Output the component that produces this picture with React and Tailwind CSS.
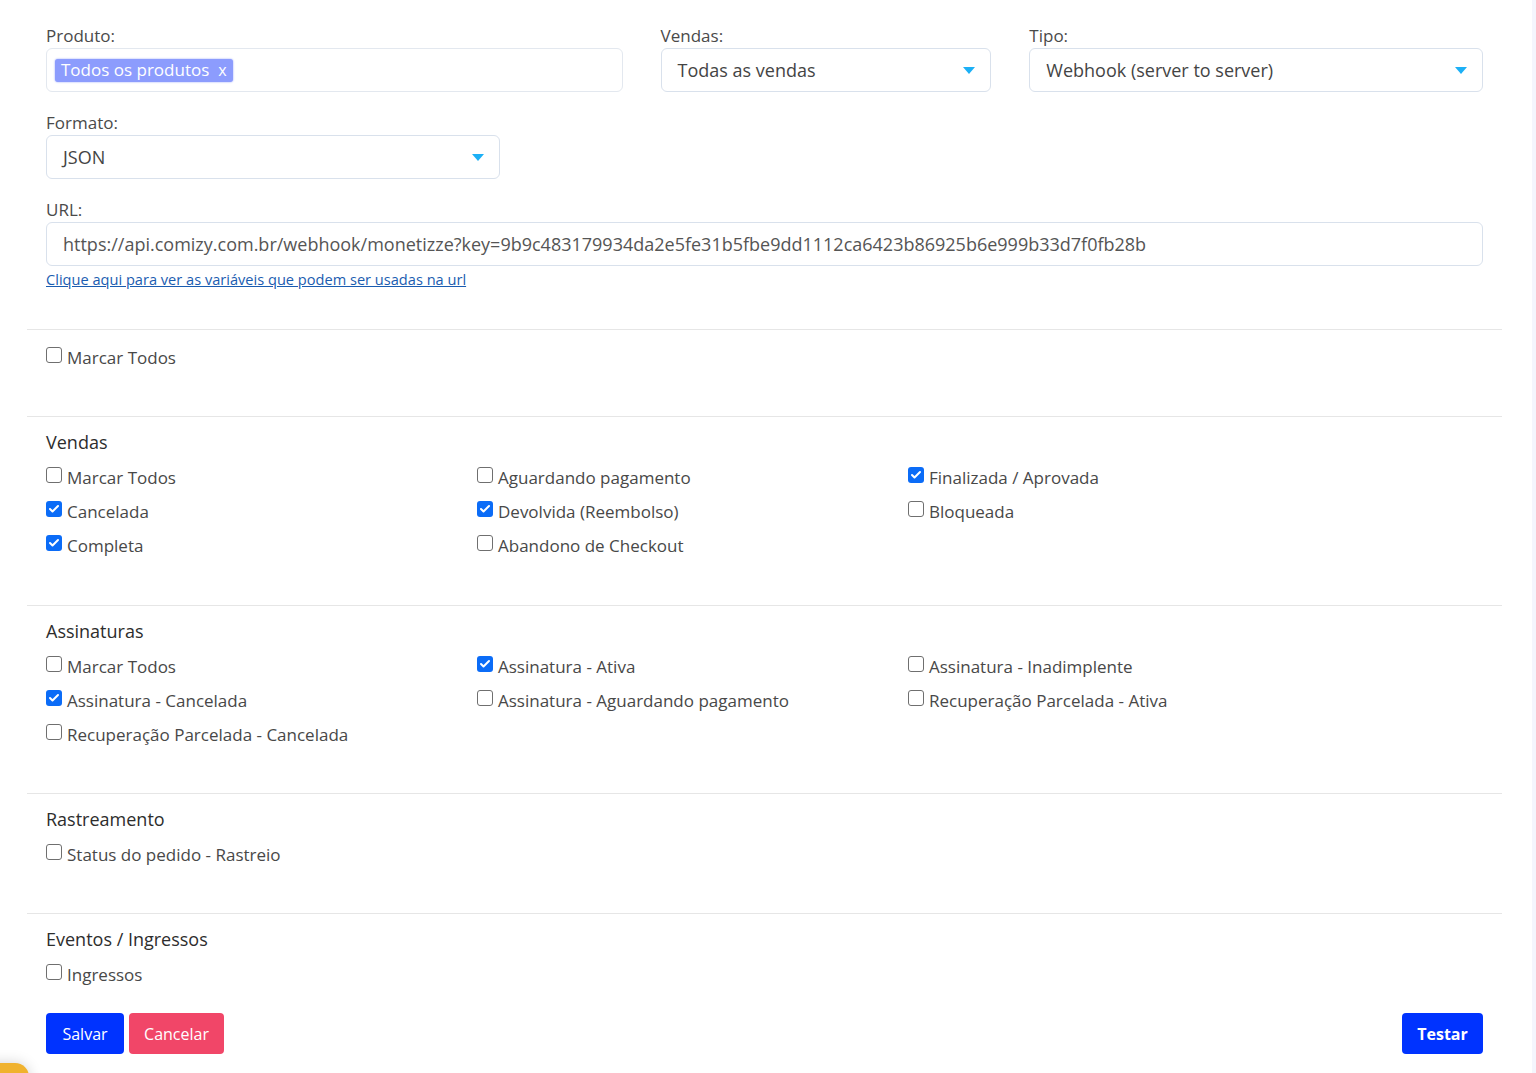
import { Check } from 'lucide-react'

const font = { fontFamily: '"Open Sans", "Noto Sans", sans-serif' }

function Caret() {
  return (
    <svg width="12" height="7" viewBox="0 0 12 7" className="shrink-0">
      <path d="M0 0h12L6 7z" fill="#1cb0f6" />
    </svg>
  )
}

function Field({ label, children, className = '' }) {
  return (
    <div className={`flex flex-col ${className}`}>
      <label className="h-6 text-[17px] leading-6 text-[#4a4a4a]">{label}</label>
      {children}
    </div>
  )
}

function SelectBox({ value }) {
  return (
    <div className="h-[44px] flex items-center justify-between px-4 pr-[15px] border border-[#d9e1ec] rounded-[6px] bg-white text-[18px] text-[#444]">
      <span>{value}</span>
      <Caret />
    </div>
  )
}

function Box({ label, checked }) {
  return (
    <div className="h-[34px] flex items-center">
      {checked ? (
        <span className="mb-1.5 w-4 h-4 rounded-[3px] bg-[#0b6cf7] flex items-center justify-center">
          <Check size={12} strokeWidth={4} color="white" />
        </span>
      ) : (
        <span className="mb-1.5 w-4 h-4 rounded-[3px] border border-[#6f6f6f] bg-white" />
      )}
      <span className="ml-[5px] text-[17px] text-[#484848]">{label}</span>
    </div>
  )
}

function Section({ title, items, bottom = 'pb-[41px]' }) {
  const pad = title ? 'pt-[13px]' : 'pt-[11px]'
  return (
    <div className={`border-t border-[#e6e6e6] px-[19px] ${pad} ${bottom}`}>
      {title && <h3 className="h-6 leading-6 text-[18px] font-medium text-[#2d2d2d]">{title}</h3>}
      <div className={`grid grid-cols-[431px_431px_1fr] ${title ? 'mt-[7px]' : ''}`}>
        {items.map(([l, c]) => (
          <Box key={l} label={l} checked={c} />
        ))}
      </div>
    </div>
  )
}

const vendas = [
  ['Marcar Todos', false],
  ['Aguardando pagamento', false],
  ['Finalizada / Aprovada', true],
  ['Cancelada', true],
  ['Devolvida (Reembolso)', true],
  ['Bloqueada', false],
  ['Completa', true],
  ['Abandono de Checkout', false],
]

const assinaturas = [
  ['Marcar Todos', false],
  ['Assinatura - Ativa', true],
  ['Assinatura - Inadimplente', false],
  ['Assinatura - Cancelada', true],
  ['Assinatura - Aguardando pagamento', false],
  ['Recuperação Parcelada - Ativa', false],
  ['Recuperação Parcelada - Cancelada', false],
]

export default function App() {
  return (
    <div className="relative h-[1073px] overflow-hidden bg-white flex" style={font}>
      <div className="flex-1 pl-[27px] pr-[30px] pt-6">
        {/* Top form fields */}
        <div className="px-[19px]">
          <div className="grid grid-cols-12 gap-x-[38px] gap-y-[19px]">
            <Field label="Produto:" className="col-span-5">
              <div className="h-[44px] flex items-center px-2 border border-[#e3e8ef] rounded-[6px] bg-white">
                <span className="h-[23px] flex items-center gap-[9px] px-[6px] rounded-[3px] bg-[#8c9cfd] text-white text-[17px] shadow-[0_0_2px_#8c9cfd]">
                  Todos os produtos
                  <span className="text-[16px]">x</span>
                </span>
              </div>
            </Field>
            <Field label="Vendas:" className="col-span-3">
              <SelectBox value="Todas as vendas" />
            </Field>
            <Field label="Tipo:" className="col-span-4">
              <SelectBox value="Webhook (server to server)" />
            </Field>
            <Field label="Formato:" className="col-span-4">
              <SelectBox value="JSON" />
            </Field>
            <Field label="URL:" className="col-span-12">
              <div className="h-[44px] flex items-center px-4 border border-[#d9e1ec] rounded-[6px] bg-white text-[18px] text-[#555]">
                https://api.comizy.com.br/webhook/monetizze?key=9b9c483179934da2e5fe31b5fbe9dd1112ca6423b86925b6e999b33d7f0fb28b
              </div>
              <a href="#" className="mt-[3px] text-[14.6px] leading-5 font-medium text-[#1a5cb0] underline w-fit">
                Clique aqui para ver as variáveis que podem ser usadas na url
              </a>
            </Field>
          </div>
        </div>

        <div className="mt-[40px]">
          <Section items={[['Marcar Todos', false]]} />
          <Section title="Vendas" items={vendas} bottom="pb-[42px]" />
          <Section title="Assinaturas" items={assinaturas} />
          <Section title="Rastreamento" items={[['Status do pedido - Rastreio', false]]} />
          <Section title="Eventos / Ingressos" items={[['Ingressos', false]]} bottom="pb-0" />
        </div>

        {/* Actions */}
        <div className="px-[19px] mt-[21px] flex items-center">
          <button className="h-[41px] w-[78px] rounded-[4px] bg-[#0033ff] text-white text-[16px] font-medium">Salvar</button>
          <button className="ml-[5px] h-[41px] w-[95px] rounded-[4px] bg-[#f14668] text-white text-[16px]">Cancelar</button>
          <button className="ml-auto h-[41px] w-[81px] rounded-[4px] bg-[#0033ff] text-white text-[16px] font-bold">Testar</button>
        </div>
      </div>
      <div className="w-1 bg-[#f4f5fd]" />

      {/* floating help button, mostly off screen */}
      <div className="absolute -left-[30px] top-[1063px] w-[59px] h-[59px] rounded-[14px] bg-[#f0b22e] shadow-[0_0_14px_rgba(0,0,0,0.18)]" />
    </div>
  )
}
